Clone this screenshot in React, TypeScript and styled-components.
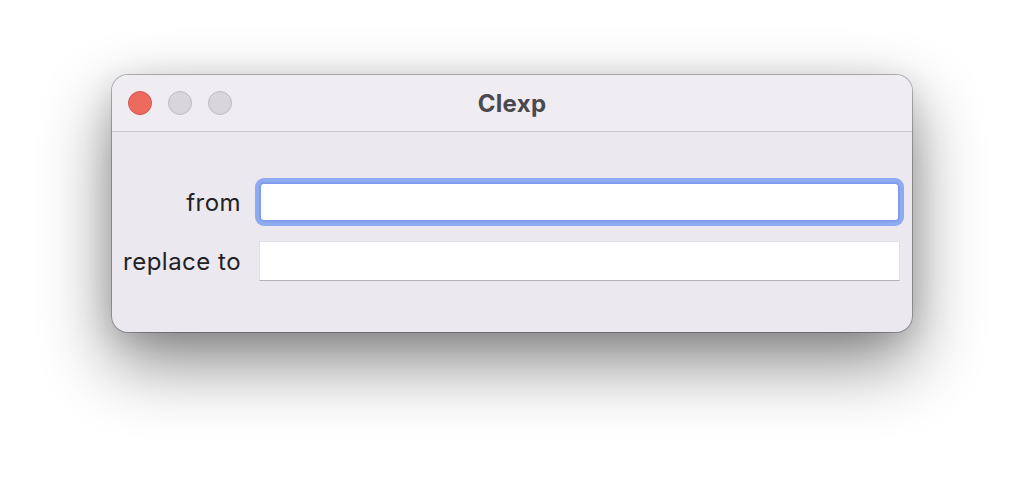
import React from "react";
import styled, { createGlobalStyle } from "styled-components";

const Global = createGlobalStyle`
  html, body { margin: 0; padding: 0; background: #ffffff; }
  body { font-family: Inter, "Noto Sans", sans-serif; }
`;

const Page = styled.div`
  width: 1024px;
  height: 480px;
  display: flex;
  justify-content: center;
  align-items: flex-start;
  padding-top: 75px;
  box-sizing: border-box;
  overflow: hidden;
`;

const Window = styled.div`
  width: 800px;
  border-radius: 16px;
  background: #ebe8ef;
  overflow: hidden;
  box-shadow: 0 0 0 1px rgba(0, 0, 0, 0.26), 0 30px 70px rgba(0, 0, 0, 0.48),
    0 6px 30px rgba(0, 0, 0, 0.12);
`;

const TitleBar = styled.div`
  height: 56px;
  background: #efecf2;
  border-bottom: 1px solid #cdcacf;
  display: flex;
  align-items: center;
  position: relative;
  padding-left: 16px;
  gap: 16px;
`;

const Light = styled.span<{ $color: string; $border: string }>`
  width: 22px;
  height: 22px;
  border-radius: 50%;
  background: ${(p) => p.$color};
  border: 1px solid ${(p) => p.$border};
`;

const Title = styled.div`
  position: absolute;
  left: 0;
  right: 0;
  text-align: center;
  font-family: Inter, "Noto Sans", sans-serif;
  font-weight: 700;
  font-size: 24px;
  letter-spacing: 0.3px;
  color: #4a494d;
  pointer-events: none;
`;

const Form = styled.div`
  display: grid;
  grid-template-columns: auto 1fr;
  column-gap: 18px;
  row-gap: 19px;
  align-items: center;
  padding: 50px 12px 51px 11px;
`;

const Label = styled.label`
  font-family: Inter, "Noto Sans", sans-serif;
  font-size: 24px;
  letter-spacing: 0.5px;
  color: #222124;
  text-align: right;
  white-space: nowrap;
`;

const Field = styled.div<{ $focused?: boolean }>`
  height: 40px;
  box-sizing: border-box;
  background: #ffffff;
  ${(p) =>
    p.$focused
      ? `border: 2px solid #7f9ced; border-radius: 5px; box-shadow: 0 0 0 4px #8eaaf0;`
      : `border: 1px solid #e2dfe5; border-bottom-color: #b3b1b6;`}
`;

export default function App() {
  return (
    <>
      <Global />
      <Page>
        <Window>
          <TitleBar>
            <Light $color="#ee6a5f" $border="#d4564b" />
            <Light $color="#d8d5dc" $border="#bdbac1" />
            <Light $color="#d8d5dc" $border="#bdbac1" />
            <Title>Clexp</Title>
          </TitleBar>
          <Form>
            <Label>from</Label>
            <Field $focused />
            <Label>replace to</Label>
            <Field />
          </Form>
        </Window>
      </Page>
    </>
  );
}
